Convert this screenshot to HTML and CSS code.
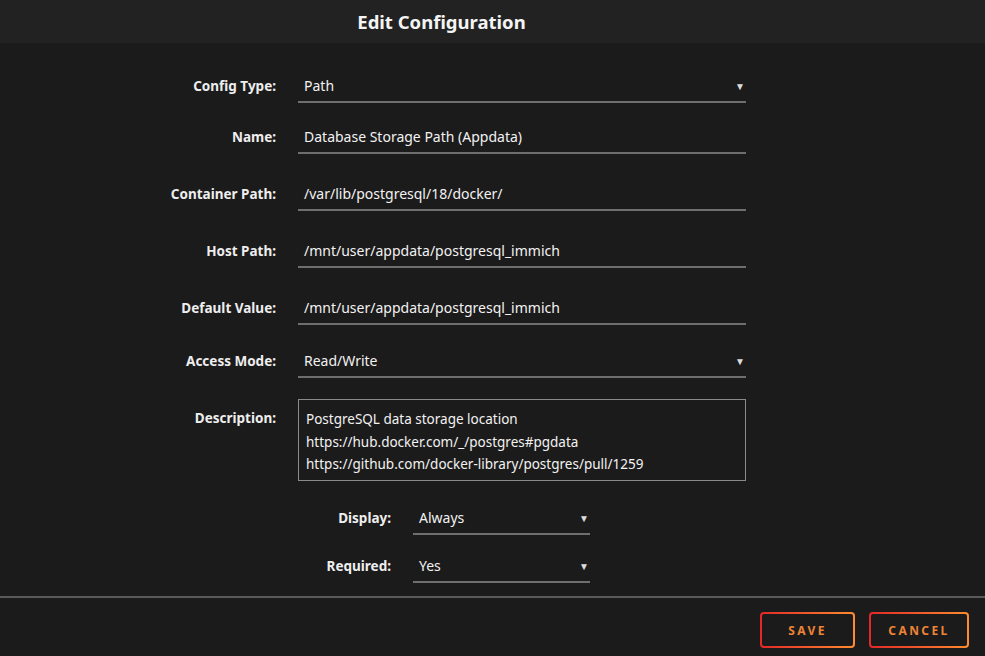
FILE: index.html
```html
<!DOCTYPE html>
<html lang="en">
<head>
    <meta charset="UTF-8">
    <meta name="viewport" content="width=device-width, initial-scale=1.0">
    <title>Edit Configuration</title>
    <link rel="stylesheet" href="styles.css">
</head>
<body>
    <div class="dialog">
        <div class="dialog-title">Edit Configuration</div>

        <div class="dialog-body">
            <div class="row">
                <label>Config Type:</label>
                <div class="select">Path</div>
            </div>
            <div class="row row-first">
                <label>Name:</label>
                <div class="input">Database Storage Path (Appdata)</div>
            </div>
            <div class="row">
                <label>Container Path:</label>
                <div class="input">/var/lib/postgresql/18/docker/</div>
            </div>
            <div class="row">
                <label>Host Path:</label>
                <div class="input">/mnt/user/appdata/postgresql_immich</div>
            </div>
            <div class="row">
                <label>Default Value:</label>
                <div class="input">/mnt/user/appdata/postgresql_immich</div>
            </div>
            <div class="row row-tight">
                <label>Access Mode:</label>
                <div class="select">Read/Write</div>
            </div>
            <div class="row row-top">
                <label>Description:</label>
                <div class="textarea">PostgreSQL data storage location<br>https://hub.docker.com/_/postgres#pgdata<br>https://github.com/docker-library/postgres/pull/1259</div>
            </div>
            <div class="row row-short row-display">
                <label>Display:</label>
                <div class="select">Always</div>
            </div>
            <div class="row row-short">
                <label>Required:</label>
                <div class="select">Yes</div>
            </div>
        </div>

        <div class="dialog-footer">
            <button class="btn btn-save">Save</button>
            <button class="btn btn-cancel">Cancel</button>
        </div>
    </div>
</body>
</html>
```

FILE: styles.css
```css
body {
    margin: 0;
    background-color: #1c1b1b;
    color: #f2f2f2;
    font-family: "Noto Sans", "Open Sans", sans-serif;
    font-size: 14px;
}
.dialog {
    height: 656px;
    display: flex;
    flex-direction: column;
}
.dialog-title {
    height: 43px;
    line-height: 44px;
    background-color: #222222;
    text-align: center;
    padding-right: 102px;
    font-size: 18.5px;
    font-weight: bold;
    color: #f4f4f4;
}
.dialog-body {
    flex: 1;
    padding-top: 29px;
}
.row {
    display: grid;
    grid-template-columns: 276px 448px;
    column-gap: 22px;
    align-items: start;
    margin-top: 26px;
}
.row:first-child {
    margin-top: 0;
}
.row-first {
    margin-top: 20px;
}
.row-tight {
    margin-top: 22px;
}
.row-top {
    margin-top: 21px;
}
.row-short {
    margin-left: 115px;
    grid-template-columns: 276px 177px;
    margin-top: 17px;
}
.row-display {
    margin-top: 23px;
}
.row label {
    text-align: right;
    font-weight: bold;
    font-size: 13.5px;
    line-height: 26px;
    padding-top: 1px;
    color: #eeeeee;
}
.row.row-top label {
    padding-top: 6px;
}
.input,
.select {
    position: relative;
    height: 26px;
    line-height: 26px;
    padding: 1px 6px 2px;
    border-bottom: 2px solid #6e6e6e;
    white-space: nowrap;
}
.select::after {
    content: "\25BC";
    position: absolute;
    right: 1px;
    top: 1px;
    font-size: 10px;
    color: #dddddd;
}
.textarea {
    height: 64px;
    padding: 8px 7px;
    border: 1px solid #8a8a8a;
    line-height: 22.5px;
    font-size: 13.5px;
}
.dialog-footer {
    height: 60px;
    flex-shrink: 0;
    border-top: 2px solid #5a5a5a;
    display: flex;
    justify-content: flex-end;
    align-items: flex-start;
    gap: 14px;
    padding: 14px 16px 0 0;
    box-sizing: border-box;
}
.btn {
    height: 36px;
    padding: 0;
    border: 2px solid transparent;
    border-radius: 4px;
    background: linear-gradient(#1c1b1b, #1c1b1b) padding-box,
        linear-gradient(90deg, #e22828, #ff8c2f) border-box;
    color: #ed8436;
    font-family: "Noto Sans", sans-serif;
    font-size: 12px;
    font-weight: bold;
    letter-spacing: 2.4px;
    text-transform: uppercase;
    cursor: pointer;
}
.btn-save {
    width: 95px;
}
.btn-cancel {
    width: 100px;
}
```
